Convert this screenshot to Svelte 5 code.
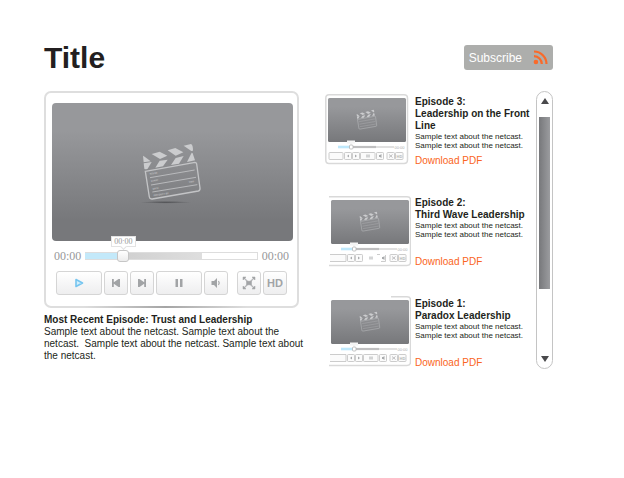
<script>
  const sample = 'Sample text about the netcast.';
  const episodes = [
    { label: 'Episode 3:', title: 'Leadership on the Front Line', dx: 0, dy: 0, frame: 'full' },
    { label: 'Episode 2:', title: 'Third Wave Leadership', dx: 3, dy: 1, frame: 'open' },
    { label: 'Episode 1:', title: 'Paradox Leadership', dx: 3, dy: 0, frame: 'corner' }
  ];
  const frames = {
    full: 'M4 .8H79Q82.500 .8 82.500 4V66Q82.500 69.500 79 69.500H4Q.8 69.500 .8 66V4Q.8 .8 4 .8Z',
    open: 'M1 .8H79Q82.500 .8 82.500 4V66Q82.500 69.500 79 69.500H1',
    corner: 'M63 .8H79Q82.500 .8 82.500 4V66Q82.500 69.500 79 69.500H1'
  };
  let position = $state(20);
</script>

{#snippet clapper(labels)}
  <g fill="#cbccce">
    <path d="M40 76L46 80L63 93L42 96Z" />
    <path d="M66 71L90 64L113 76L91 86Z" />
    <path d="M114 60L137 53L161 66L138 76Z" />
    <path d="M162 46L184 41Q190 43 190 61L185 62Z" />
    <path d="M42 99L66 95L54 115Q46 119 44 115Z" />
    <path d="M90 91L114 88L100 108L77 112Z" />
    <path d="M138 83L162 77L148 100L124 104Z" />
    <path d="M186 67L189 69L196 90L172 95Z" />
  </g>
  <g fill="none" stroke="#c3c4c6" stroke-width="4">
    <path d="M47 123L196 96Q200 96 201 101L211 173Q212 180 206 182L68 206Q60 207 59 200Z" />
    <g stroke-width="2.500">
      <path d="M61 142L195 119M64 164L199 141M68 185L203 163" />
    </g>
  </g>
  {#if labels}
    <g class="slate" fill="#c3c4c6">
      <text transform="translate(60 133) rotate(-9)">SCENE</text>
      <text transform="translate(64 155) rotate(-9)">START</text>
      <text transform="translate(69 178) rotate(-9)">DATE</text>
      <text transform="translate(72 198) rotate(-9)">PRODUCT BY</text>
      <text transform="translate(177 158) rotate(-9)">TIME</text>
    </g>
  {/if}
{/snippet}

<main>
  <header>
    <h1>Title</h1>
    <button class="subscribe" type="button">
      Subscribe
      <svg width="15" height="15" viewBox="0 0 15 15" aria-hidden="true">
        <circle cx="2.900" cy="12" r="2.300" fill="#f96a2a" />
        <path d="M1 6.200A7.800 7.800 0 0 1 8.800 14M1 1.500A12.500 12.500 0 0 1 13.500 14" fill="none" stroke="#f96a2a" stroke-width="2.200" />
      </svg>
    </button>
  </header>

  <div class="columns">
    <section class="featured">
      <div class="player">
        <div class="screen">
          <svg width="64" height="66" viewBox="34 26 192 198" aria-hidden="true">
            <defs>
              <radialGradient id="ground">
                <stop offset="0" stop-color="#4c4d50" stop-opacity=".9" />
                <stop offset="1" stop-color="#4c4d50" stop-opacity="0" />
              </radialGradient>
            </defs>
            <ellipse cx="108" cy="216" rx="78" ry="4" fill="url(#ground)" />
            {@render clapper(true)}
          </svg>
        </div>

        <div class="timeline">
          <span>00:00</span>
          <div class="seek">
            <output>00:00</output>
            <input type="range" min="0" max="100" bind:value={position} aria-label="Seek" style="--played: {position}%" />
          </div>
          <span>00:00</span>
        </div>

        <div class="controls">
          <div class="group transport">
            <button class="wide" type="button" aria-label="Play">
              <svg width="10" height="10" viewBox="0 0 10 10"><path d="M2 1.500L8.500 5L2 8.500Z" fill="#d3effc" stroke="#76c5ef" stroke-width="1.600" stroke-linejoin="round" /></svg>
            </button>
            <button type="button" aria-label="Previous">
              <svg width="10" height="10" viewBox="0 0 10 10"><path d="M1 1H2.800V4.200L7.500 1H9V9H7.500L2.800 5.800V9H1Z" fill="#a2a4a6" /></svg>
            </button>
            <button type="button" aria-label="Next">
              <svg width="10" height="10" viewBox="0 0 10 10"><path d="M9 1H7.200V4.200L2.500 1H1V9H2.500L7.200 5.800V9H9Z" fill="#a2a4a6" /></svg>
            </button>
            <button class="wide" type="button" aria-label="Pause">
              <svg width="10" height="10" viewBox="0 0 10 10"><path d="M1.500 1H4V9H1.500ZM6 1H8.500V9H6Z" fill="#a2a4a6" /></svg>
            </button>
            <button type="button" aria-label="Volume">
              <svg width="12" height="12" viewBox="0 0 12 12"><path d="M1.500 4H4L7 1V11L4 8H1.500Z" fill="#a2a4a6" /><path d="M8.500 4Q10 6 8.500 8" fill="none" stroke="#a2a4a6" stroke-width="1.200" /></svg>
            </button>
          </div>
          <div class="group display">
            <button type="button" aria-label="Full screen">
              <svg width="14" height="14" viewBox="0 0 14 14"><path d="M2 2L12 12M12 2L2 12" stroke="#b5b7b9" stroke-width="1.300" /><path d="M1 1H4L1 4ZM13 1V4L10 1ZM1 13V10L4 13ZM13 13H10L13 10ZM4.500 5.200H9.500V8.800H4.500Z" fill="#a2a4a6" stroke="#a2a4a6" stroke-width=".5" /></svg>
            </button>
            <button class="hd" type="button">HD</button>
          </div>
        </div>
      </div>

      <h2>Most Recent Episode: Trust and Leadership</h2>
      <p>Sample text about the netcast. Sample text about the<br />netcast.&nbsp; Sample text about the netcast. Sample text about<br />the netcast.</p>
    </section>

    <section class="archive">
      <div class="list">
        {#each episodes as episode}
          <article>
            <svg class="thumb" width="86" height="72" viewBox="0 0 86 72" aria-hidden="true">
              <defs>
                <linearGradient id="shade" x2="0" y2="1">
                  <stop offset=".2" stop-color="#97989b" />
                  <stop offset="1" stop-color="#77787b" />
                </linearGradient>
              </defs>
              <g transform="translate({episode.dx} {episode.dy})">
                <path d={frames[episode.frame]} fill="none" stroke="#d9d9d9" stroke-width="1.500" />
                <rect x="3" y="4" width="78" height="44" rx="1.500" fill="url(#shade)" />
                <g transform="translate(27 11) scale(.117)">{@render clapper(false)}</g>
                <path d="M22 46.500H30V49.500H27L26 51L25 49.500H22Z" fill="#f4f4f4" />
                <path d="M13 53H26" stroke="#bfe8fb" stroke-width="2.600" />
                <path d="M26 53H51" stroke="#bfbfc0" stroke-width="2.200" />
                <path d="M51 53H69" stroke="#d9d9d9" stroke-width="1.600" />
                <rect x="24.500" y="51" width="3.500" height="4" rx="1" fill="#fff" stroke="#b4b4b4" stroke-width=".8" />
                <text class="clock" x="69.500" y="54.500">00:00</text>
                <g fill="#fbfbfb" stroke="#c6c6c6" stroke-width=".9">
                  {#if episode.frame === 'full'}
                    <rect x="4" y="58.500" width="14" height="7" rx=".8" />
                  {:else}
                    <path d="M2 58.500H18V65.500H2" />
                  {/if}
                  <rect x="19.500" y="58.500" width="7" height="7" rx=".8" />
                  <rect x="27.500" y="58.500" width="7" height="7" rx=".8" />
                  {#if episode.frame === 'open'}
                    <path d="M49 58.500H52M57.500 59V65.500H53" />
                  {:else}
                    <rect x="35.500" y="58.500" width="14.500" height="7" rx=".8" />
                    <rect x="51.500" y="58.500" width="7" height="7" rx=".8" />
                  {/if}
                  <rect x="62" y="58.500" width="7.500" height="7" rx=".8" />
                  <rect x="70.500" y="58.500" width="7.500" height="7" rx=".8" />
                </g>
                <path d="M24 60.500V63.500L22 62ZM30 60.500V63.500L32 62ZM41.500 60.500H42.500V63.500H41.500ZM43.500 60.500H44.500V63.500H43.500ZM54 61H55L56.500 60V64L55 63H54Z" fill="#a9abad" />
                <path d="M64 60.500L67.500 63.500M67.500 60.500L64 63.500" stroke="#b5b6b8" stroke-width=".9" />
                <text class="badge" x="71.500" y="63.500">HD</text>
              </g>
            </svg>
            <div class="details">
              <h3>{episode.label}<br />{episode.title}</h3>
              <p>{sample}<br />{sample}</p>
              <a href="#download">Download PDF</a>
            </div>
          </article>
        {/each}
      </div>

      <div class="scrollbar">
        <button type="button" aria-label="Scroll up">
          <svg width="8" height="6" viewBox="0 0 8 6"><path d="M4 0L8 6H0Z" fill="#4a4a4c" /></svg>
        </button>
        <div class="track"><div class="grip"></div></div>
        <button type="button" aria-label="Scroll down">
          <svg width="8" height="6" viewBox="0 0 8 6"><path d="M4 6L8 0H0Z" fill="#4a4a4c" /></svg>
        </button>
      </div>
    </section>
  </div>
</main>

<style>
  :global(body) {
    background: #fff;
  }
  main {
    padding: 40px 71px 40px 44px;
    font-family: 'Liberation Sans', Arial, sans-serif;
    font-size: 10px;
    line-height: 12px;
    color: #231f20;
  }
  h1, h2, h3, p {
    margin: 0;
  }
  button {
    margin: 0;
    padding: 0;
    font-family: inherit;
    display: flex;
    align-items: center;
    justify-content: center;
  }
  header {
    display: flex;
    align-items: center;
    justify-content: space-between;
    margin-bottom: 16px;
  }
  h1 {
    font-size: 30px;
    line-height: 35px;
  }
  .subscribe {
    height: 25px;
    padding: 0 5px;
    gap: 11px;
    border: 0;
    border-radius: 3px;
    background: #adaeac;
    color: #fff;
    font-size: 12px;
  }
  .columns {
    display: grid;
    grid-template-columns: minmax(0, 1fr) 228px;
    gap: 26px;
    align-items: start;
  }
  .player {
    position: relative;
    box-sizing: border-box;
    padding: 10px 4px 11px 6px;
    border: 2px solid #dedede;
    border-radius: 7px;
    margin-bottom: 6px;
  }
  .player::after {
    content: '';
    position: absolute;
    left: 15%;
    right: 20%;
    bottom: -2px;
    height: 2px;
    background: linear-gradient(90deg, #dedede, #a5a5a5, #dedede);
  }
  .screen {
    display: flex;
    align-items: center;
    justify-content: center;
    aspect-ratio: 241 / 138;
    border-radius: 4px;
    background: linear-gradient(#97989b 20%, #77787b 85%);
  }
  .slate {
    font-size: 7px;
    font-weight: bold;
  }
  .timeline {
    display: flex;
    align-items: center;
    gap: 4px;
    margin-top: 8px;
    padding: 0 4px 0 2px;
    font-family: 'Liberation Serif', 'Times New Roman', serif;
    font-size: 12px;
    line-height: 14px;
    color: #97989a;
  }
  .seek {
    position: relative;
    display: flex;
    flex: 1;
    min-width: 0;
  }
  output {
    position: absolute;
    left: 26px;
    bottom: 16px;
    padding: 0 2px;
    border: 1px solid #e3e3e3;
    background: #fff;
    font-size: 8px;
    line-height: 9px;
  }
  output::after {
    content: '';
    position: absolute;
    left: 9px;
    bottom: -3px;
    width: 5px;
    height: 5px;
    background: #fff;
    border: solid #e3e3e3;
    border-width: 0 1px 1px 0;
    transform: rotate(45deg);
    box-sizing: border-box;
  }
  input {
    appearance: none;
    width: 100%;
    height: 14px;
    margin: 0;
    background: linear-gradient(90deg, #c3e9fa var(--played), #cfcfcf var(--played), #dedede 68%, #fff 68%) center / 100% 6px no-repeat;
  }
  input::-webkit-slider-runnable-track {
    height: 8px;
    box-sizing: border-box;
    border: 1px solid rgba(180, 180, 180, 0.45);
    border-left: 0;
  }
  input::-webkit-slider-thumb {
    appearance: none;
    width: 12px;
    height: 12px;
    margin-top: -3px;
    box-sizing: border-box;
    border: 1px solid #c6c6c6;
    border-radius: 3px;
    background: linear-gradient(#fff, #ececec);
  }
  .controls {
    display: flex;
    gap: 9px;
    margin-top: 8px;
    padding: 0 6px 0 4px;
  }
  .group {
    display: flex;
    gap: 2px;
  }
  .transport {
    flex: 1;
  }
  .group button {
    flex: 1 1 0;
    min-width: 0;
    height: 24px;
    box-sizing: border-box;
    border: 1px solid #d5d5d5;
    border-radius: 3px;
    background: linear-gradient(#fff, #eeeeef);
    color: #a2a4a6;
  }
  .group .wide {
    flex-grow: 2;
  }
  .display button {
    flex: 0 0 24px;
  }
  .group .hd {
    font-size: 11px;
    font-weight: bold;
  }
  h2, h3 {
    font-size: 10px;
    line-height: 12px;
  }
  .featured p {
    white-space: nowrap;
  }
  .archive {
    display: flex;
  }
  .list {
    flex: 1;
    display: flex;
    flex-direction: column;
    gap: 28px;
    padding-top: 3px;
  }
  article {
    display: flex;
    gap: 4px;
    min-height: 73px;
  }
  .thumb {
    flex: none;
  }
  .clock {
    font-size: 4px;
    fill: #a9abad;
  }
  .badge {
    font-size: 4px;
    font-weight: bold;
    fill: #b5b6b8;
  }
  .details {
    flex: 1;
    display: flex;
    flex-direction: column;
    align-items: flex-start;
    min-width: 0;
    padding-top: 2px;
  }
  .details h3 {
    margin-right: -4px;
  }
  .details p {
    font-size: 8px;
    line-height: 9px;
    white-space: nowrap;
  }
  a {
    margin-top: auto;
    color: #fa6422;
    text-decoration: none;
  }
  .scrollbar {
    display: flex;
    flex-direction: column;
    width: 17px;
    box-sizing: border-box;
    border: 1px solid #c4c4c4;
    border-radius: 9px;
  }
  .scrollbar button {
    height: 18px;
    border: 0;
    background: none;
  }
  .track {
    flex: 1;
    padding: 7px 2px 0;
  }
  .grip {
    height: 74%;
    background: linear-gradient(90deg, #77787b, #9b9c9f);
  }
</style>
